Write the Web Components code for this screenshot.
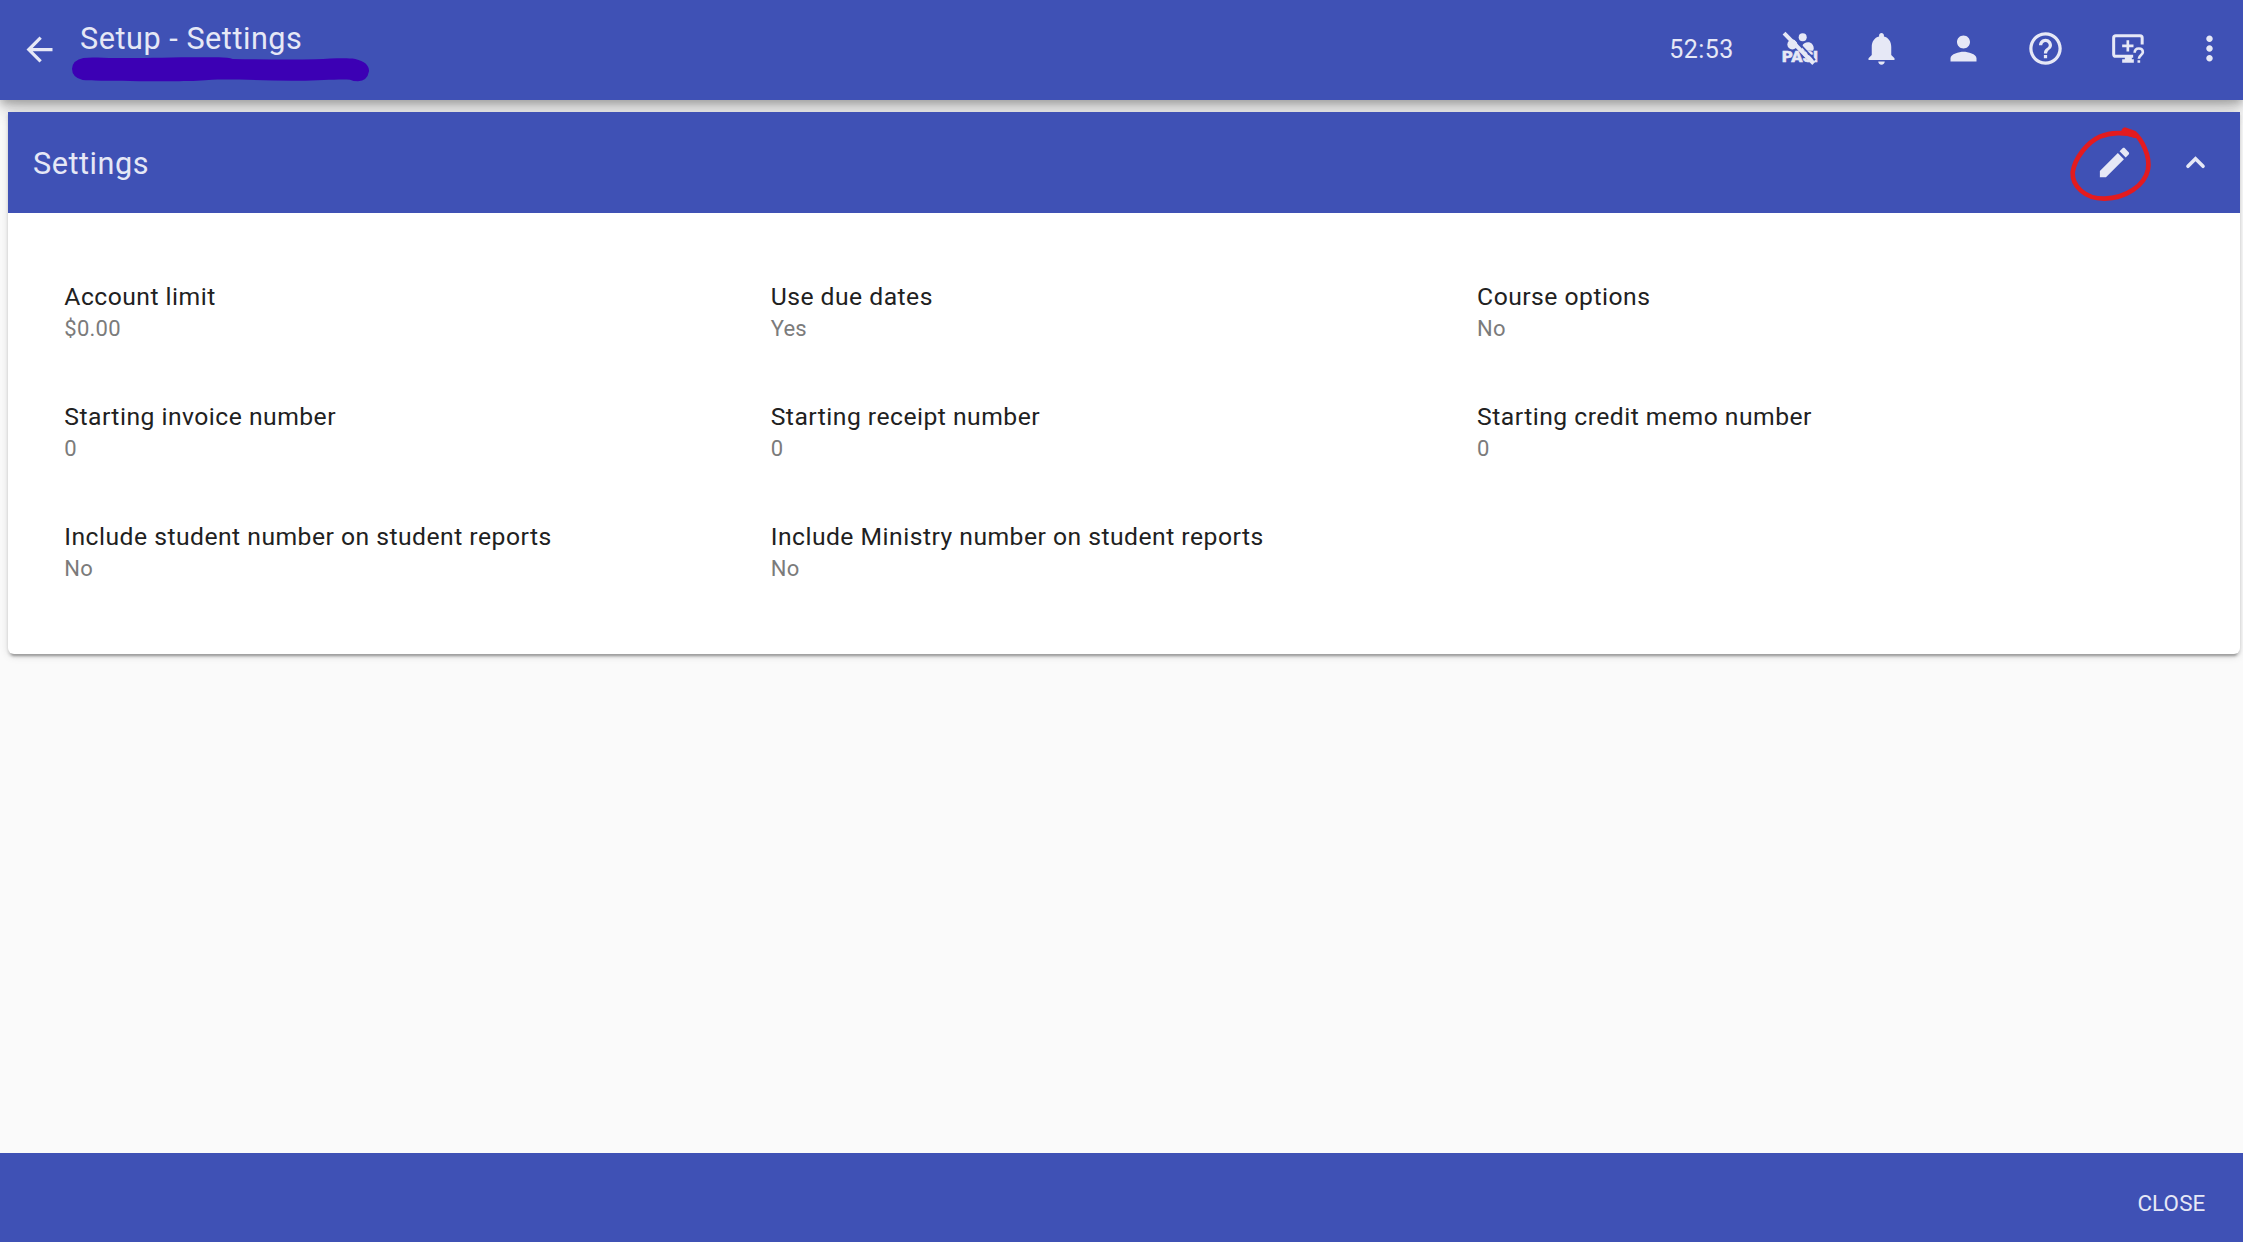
<!DOCTYPE html>
<html lang="en">
<head>
<meta charset="utf-8">
<title>Setup - Settings</title>
<style>
html,body{margin:0;height:100%}
body{font-family:Roboto,"Liberation Sans",sans-serif;background:#fafafa;overflow:hidden}
</style>
</head>
<body>
<settings-page></settings-page>
<script>
const define = (name, html) => customElements.define(name, class extends HTMLElement {
  constructor() {
    super();
    this.attachShadow({mode: 'open'}).innerHTML = html;
  }
});

const ICONS = {
  back: '<path d="M20 11H7.830l5.590-5.590L12 4l-8 8 8 8 1.410-1.410L7.830 13H20z"/>',
  bell: '<path d="M12 22c1.100 0 2-.9 2-2h-4c0 1.100.89 2 2 2zm6-6v-5c0-3.070-1.640-5.640-4.500-6.320V4c0-.83-.67-1.500-1.500-1.500s-1.500.67-1.500 1.500v.68C7.630 5.360 6 7.920 6 11v5l-2 2v1h16v-1l-2-2z"/>',
  person: '<path d="M12 12c2.210 0 4-1.790 4-4s-1.790-4-4-4-4 1.790-4 4 1.790 4 4 4zm0 2c-2.670 0-8 1.340-8 4v2h16v-2c0-2.660-5.330-4-8-4z"/>',
  help: '<path d="M11 18h2v-2h-2v2zm1-16C6.480 2 2 6.480 2 12s4.480 10 10 10 10-4.480 10-10S17.520 2 12 2zm0 18c-4.410 0-8-3.590-8-8s3.590-8 8-8 8 3.590 8 8-3.590 8-8 8zm0-14c-2.210 0-4 1.790-4 4h2c0-1.100.9-2 2-2s2 .9 2 2c0 2-3 1.750-3 5h2c0-2.250 3-2.500 3-5 0-2.210-1.790-4-4-4z"/>',
  more: '<path d="M12 8c1.100 0 2-.9 2-2s-.9-2-2-2-2 .9-2 2 .9 2 2 2zm0 2c-1.100 0-2 .9-2 2s.9 2 2 2 2-.9 2-2-.9-2-2-2zm0 6c-1.100 0-2 .9-2 2s.9 2 2 2 2-.9 2-2-.9-2-2-2z"/>',
  edit: '<path d="M3 17.250V21h3.750L17.810 9.940l-3.750-3.750L3 17.250zM20.710 7.040c.39-.39.39-1.020 0-1.410l-2.340-2.340c-.39-.39-1.020-.39-1.410 0l-1.830 1.830 3.750 3.750 1.830-1.830z"/>',
  up: '<path d="M7.100 14.500L12 9.600l4.900 4.900" fill="none" stroke="currentColor" stroke-width="2.300" stroke-linecap="round"/>'
};
const WIDE = {
  pasi: ['420.9 88.5 117 117', '<circle cx="489" cy="113" r="12"/><circle cx="458" cy="135" r="15"/><path d="M488 139c2-7 9-11 17-11 10 0 17 8 17 18 0 3-1 6-2 8h-34z"/><text x="427" y="188" font-family="Roboto,sans-serif" font-weight="900" font-size="45" stroke="currentColor" stroke-width="1.500" textLength="108" lengthAdjust="spacingAndGlyphs">PASI</text><path d="M447 98l79 84" stroke="#3f51b5" stroke-width="5"/><path d="M433 101l89 91" stroke="currentColor" stroke-width="12"/>'],
  screen: ['563.5 88.5 117 117', '<g fill="none" stroke="currentColor" stroke-width="9"><path d="M666 135v-20q0-6.500-6.500-6.500H587q-6.500 0-6.500 6.500v49q0 6.500 6.500 6.500h52"/><path d="M623 122v34M606 139h34" stroke-width="8"/><path d="M643.500 160c0-8 5-13 12.500-13s12 5 12 11c0 8-12 9-12 20" stroke-width="8"/></g><path d="M614 170h21v9h6v11h-35v-11h8zM652 182h8v8h-8z"/>']
};
customElements.define('app-icon', class extends HTMLElement {
  connectedCallback() {
    const n = this.getAttribute('name');
    const [box, body] = WIDE[n] || ['0 0 24 24', ICONS[n]];
    const root = this.shadowRoot || this.attachShadow({mode: 'open'});
    root.innerHTML = `<style>:host{display:block;width:39px;height:39px;flex:none;color:#e6e8f6}svg{display:block;width:100%;height:100%;overflow:visible}</style><svg viewBox="${box}" fill="currentColor">${body}</svg>`;
  }
});

define('title-marker', `<style>:host{display:block;width:300px;height:26px}svg{display:block}</style>
<svg width="300" height="26" viewBox="0 0 900 78"><path fill="#3c00b4" d="M34 3C60 -1 90 3 130 3C230 4 300 0 440 1Q470 1 482 6C560 7 650 9 730 7C780 5 820 2 850 6Q892 16 891 43Q886 72 858 73Q844 73 834 68C790 66 740 72 660 71C580 70 500 67 420 68C370 73 280 73 200 73C130 69 80 73 32 69Q0 61 0 35Q2 9 34 3Z"/></svg>`);

define('app-header', `<style>
:host{display:flex;box-sizing:border-box;height:100px;background:#3f51b5;color:#e6e8f6;position:relative;padding:0 14.500px 0 20px;box-shadow:0 5px 8px -1px rgba(0,0,0,.2),0 9px 16px rgba(0,0,0,.14),0 2px 28px rgba(0,0,0,.12)}
.back{margin-top:29.500px}
.title{margin:21px 0 0 13px;flex:1}
.name{font-size:30.600px;line-height:36px;letter-spacing:.54px;padding-left:8px}
.actions{display:flex;align-items:center;gap:42.900px;height:97.600px}
.time{font-size:25px;letter-spacing:.45px;margin:1px 3.500px 0 0}
</style>
<app-icon class="back" name="back"></app-icon>
<div class="title"><div class="name"><slot></slot></div><title-marker></title-marker></div>
<div class="actions"><span class="time"><slot name="time"></slot></span>
<app-icon name="pasi"></app-icon><app-icon name="bell"></app-icon><app-icon name="person"></app-icon><app-icon name="help"></app-icon><app-icon name="screen"></app-icon><app-icon name="more"></app-icon></div>`);

define('setting-field', `<style>
:host{display:block}
.label{font-size:24.700px;line-height:32px;letter-spacing:.48px;color:#212121;white-space:nowrap}
.value{font-size:22px;line-height:28px;letter-spacing:.25px;color:#7b7b7b;margin-top:2px}
</style><div class="label"><slot name="label"></slot></div><div class="value"><slot></slot></div>`);

define('edit-button', `<style>
:host{display:block;position:relative;width:39px;height:39px}
svg{position:absolute;left:-26px;top:-19px;overflow:visible;pointer-events:none}
</style><app-icon name="edit"></app-icon>
<svg width="84" height="80" viewBox="147 72 252 240" fill="none" stroke="#e31b1f" stroke-linecap="round"><path stroke-width="14" d="M345 107C315 96 272 97 240 110C202 127 164 174 158 217C156 257 194 297 254 296C316 294 374 258 384 208C391 168 366 119 343 99L315 89"/><path stroke-width="15" d="M312 92L344 106M318 98L344 106"/></svg>`);

define('settings-card', `<style>
:host{display:block;box-sizing:border-box;height:542px;background:#fff;border-radius:0 0 6px 6px;box-shadow:0 5px 2px -3px rgba(0,0,0,.2),0 3px 3px rgba(0,0,0,.14),0 2px 8px rgba(0,0,0,.12)}
.bar{display:flex;align-items:center;height:101px;box-sizing:border-box;padding:0 26.500px 0 25px;background:#3f51b5;color:#e6e8f6}
.heading{flex:1;font-size:30.600px;letter-spacing:.54px;line-height:36px;padding-top:2px}
.up{width:37px;height:37px;margin-left:43px}
.grid{display:grid;grid-template-columns:repeat(3,706.400px);row-gap:58px;padding:68px 0 0 56.300px}
</style>
<div class="bar"><div class="heading"><slot name="heading"></slot></div><edit-button></edit-button><app-icon class="up" name="up"></app-icon></div>
<div class="grid"><slot></slot></div>`);

define('app-footer', `<style>
:host{display:flex;justify-content:flex-end;align-items:center;box-sizing:border-box;height:89px;padding:11px 37.500px 0 0;background:#3f51b5;color:#e6e8f6;font-size:22.400px;letter-spacing:.15px}
</style><slot></slot>`);

const field = (label, value) => `<setting-field><span slot="label">${label}</span>${value}</setting-field>`;
define('settings-page', `<style>
:host{display:flex;flex-direction:column;height:1242px;background:#fafafa}
main{flex:1;padding:12px 3px 0 8px}
settings-card{position:relative}
</style>
<app-header>Setup - Settings<span slot="time">52:53</span></app-header>
<main><settings-card><span slot="heading">Settings</span>
${field('Account limit', '$0.00')}${field('Use due dates', 'Yes')}${field('Course options', 'No')}
${field('Starting invoice number', '0')}${field('Starting receipt number', '0')}${field('Starting credit memo number', '0')}
${field('Include student number on student reports', 'No')}${field('Include Ministry number on student reports', 'No')}
</settings-card></main>
<app-footer>CLOSE</app-footer>`);
</script>
</body>
</html>
